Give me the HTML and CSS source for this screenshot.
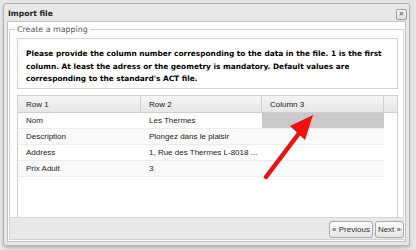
FILE: index.html
```html
<!DOCTYPE html>
<html>
<head>
<meta charset="utf-8">
<link rel="stylesheet" href="styles.css">
</head>
<body>
<div class="window">
  <div class="titlebar">
    <span class="title">Import file</span>
    <span class="close">&#x2715;</span>
  </div>
  <div class="panel">
    <fieldset class="fs">
      <legend>Create a mapping</legend>
      <div class="info">Please provide the column number corresponding to the data in the file. 1 is the first column. At least the adress or the geometry is mandatory. Default values are corresponding to the standard's ACT file.</div>
      <div class="grid">
        <div class="ghead">
          <div class="hc c1">Row 1</div>
          <div class="hc c2">Row 2</div>
          <div class="hc c3">Column 3</div>
          <div class="hc c4"></div>
        </div>
        <div class="row">
          <div class="cell c1">Nom</div>
          <div class="cell c2">Les Thermes</div>
          <div class="cell c3 sel"></div>
        </div>
        <div class="row alt">
          <div class="cell c1">Description</div>
          <div class="cell c2">Plongez dans le plaisir</div>
          <div class="cell c3"></div>
        </div>
        <div class="row">
          <div class="cell c1">Address</div>
          <div class="cell c2">1, Rue des Thermes L-8018 ...</div>
          <div class="cell c3"></div>
        </div>
        <div class="row alt">
          <div class="cell c1">Prix Adult</div>
          <div class="cell c2">3</div>
          <div class="cell c3"></div>
        </div>
      </div>
      <div class="toolbar">
        <button class="btn">« Previous</button>
        <button class="btn">Next »</button>
      </div>
    </fieldset>
  </div>
</div>
<svg class="arrow" width="416" height="250" viewBox="0 0 416 250">
  <line x1="266" y1="177" x2="303" y2="128" stroke="#f01010" stroke-width="4.5" stroke-linecap="round"/>
  <polygon points="313,115 290,126 305,140" fill="#f01010"/>
</svg>
</body>
</html>
```
FILE: styles.css
```css
* { box-sizing: border-box; }
html, body { margin: 0; padding: 0; }
body {
  width: 416px;
  height: 250px;
  background: #e4e6e3;
  position: relative;
  overflow: hidden;
  font-family: "DejaVu Sans", sans-serif;
}
.window {
  position: absolute;
  left: 3px;
  top: 3px;
  width: 407px;
  height: 243px;
  background: #e7e7e7;
  border: 1px solid #b4b4b4;
  border-radius: 3px;
  display: flex;
  flex-direction: column;
  padding: 0 3px 3px 3px;
  box-shadow: 0 2px 3px rgba(0,0,0,0.18);
}
.titlebar {
  height: 17px;
  display: flex;
  align-items: center;
  justify-content: space-between;
  padding-left: 1px;
  padding-right: 0;
}
.title {
  font-weight: bold;
  font-size: 7.6px;
  color: #222;
  margin-top: 1px;
}
.close {
  width: 11px;
  height: 11px;
  border: 1px solid #9a9a9a;
  border-radius: 2px;
  background: linear-gradient(#fafafa, #e0e0e0);
  font-size: 7px;
  line-height: 9px;
  text-align: center;
  color: #555;
  margin-top: 4px;
  margin-right: -1px;
}
.panel {
  flex: 1;
  background: #fff;
  border: 1px solid #c4c4c4;
  padding: 3px 1px 1px 1px;
  display: flex;
}
.fs {
  flex: 1;
  margin: 0;
  padding: 0;
  border: 1px solid #d2d2d2;
  display: flex;
  flex-direction: column;
  min-width: 0;
}
legend {
  font-size: 7.9px;
  color: #555;
  padding: 0 2px;
  margin-left: 5px;
}
.info {
  margin: 4px 5px 0 7px;
  height: 51px;
  border: 1px solid #d5d5d5;
  padding: 9px 4px 0 8px;
  font-weight: bold;
  font-size: 7.4px;
  line-height: 12.5px;
  color: #000;
}
.grid {
  margin: 6px 5px 0 7px;
  flex: 1;
  border: 1px solid #d0d0d0;
  border-bottom: none;
  font-family: "Liberation Sans", Arial, sans-serif;
  font-size: 8px;
  color: #222;
}
.ghead {
  display: flex;
  height: 17px;
  background: linear-gradient(#f5f5f5, #e6e6e6);
  border-bottom: 1px solid #cfcfcf;
}
.hc {
  border-right: 1px solid #d0d0d0;
  padding-left: 8px;
  line-height: 17px;
  color: #222;
}
.c1 { width: 123px; }
.c2 { width: 121px; }
.c3 { width: 122px; }
.hc.c4 { flex: 1; border-right: none; }
.row {
  display: flex;
  height: 16px;
  width: 366px;
  border-bottom: 1px solid #ededed;
}
.row.alt { background: #fafafa; }
.cell {
  padding-left: 8px;
  line-height: 16px;
  white-space: nowrap;
  overflow: hidden;
}
.cell.sel { background: #c9c9c9; }
.toolbar {
  height: 22px;
  background: #e8e8e8;
  border-top: 1px solid #d8d8d8;
  display: flex;
  justify-content: flex-end;
  align-items: center;
  gap: 2px;
  padding-right: 0;
  margin-right: -1px;
}
.btn {
  height: 17px;
  padding: 0 2px;
  border: 1px solid #a9a9a9;
  border-radius: 3px;
  background: linear-gradient(#fdfdfd, #e4e4e4);
  font-family: "Liberation Sans", Arial, sans-serif;
  font-size: 8px;
  color: #333;
  margin-top: 2px;
}
.arrow {
  position: absolute;
  left: 0;
  top: 0;
}
```
